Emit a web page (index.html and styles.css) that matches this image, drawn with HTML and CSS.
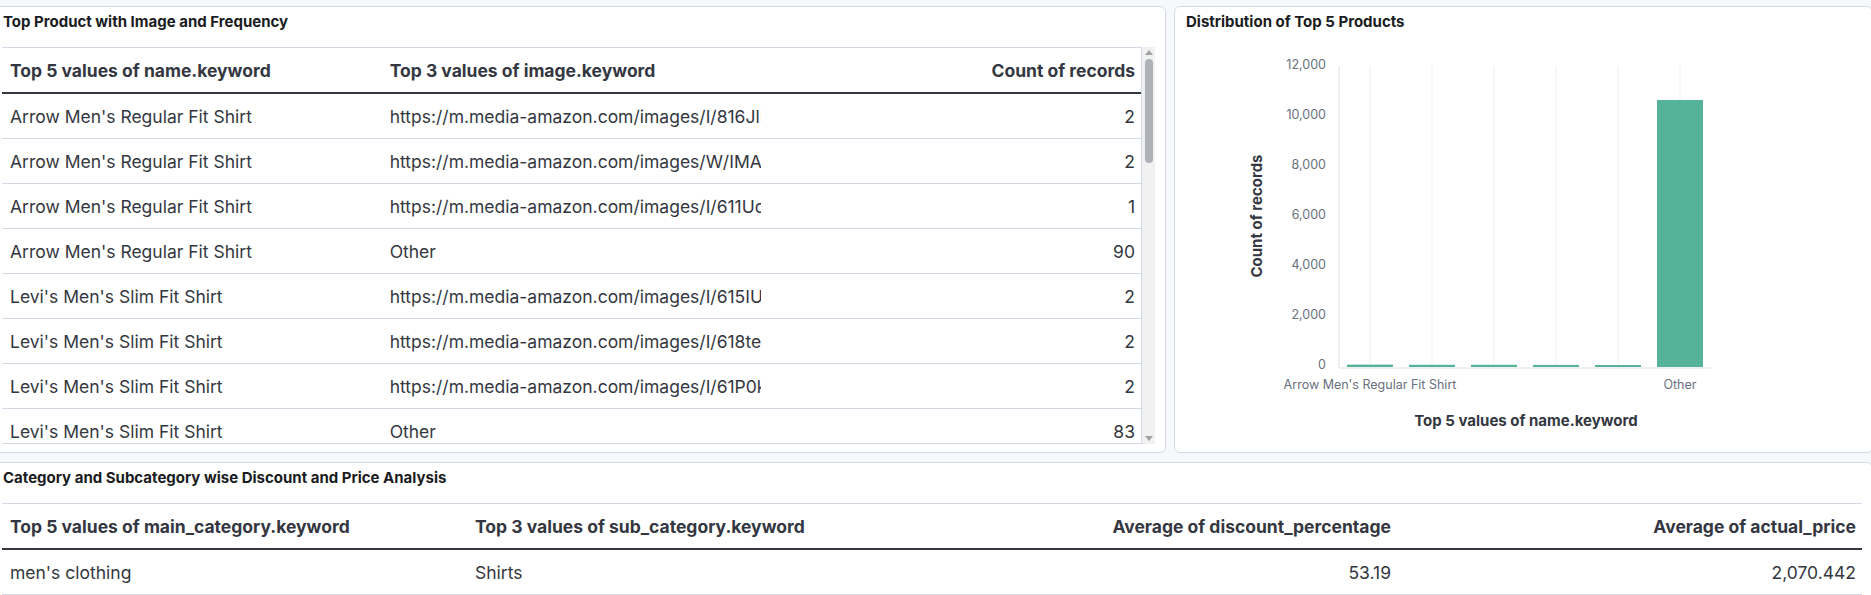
FILE: index.html
```html
<!DOCTYPE html>
<html lang="en">
<head>
<meta charset="utf-8">
<title>Dashboard</title>
<link rel="stylesheet" href="styles.css">
</head>
<body>
<div class="dashboard">
  <section class="panel panel-table">
    <h2 class="panel-title">Top Product with Image and Frequency</h2>
    <div class="table-wrap">
      <div class="table-scroll">
        <table class="dt">
          <thead>
            <tr><th>Top 5 values of name.keyword</th><th>Top 3 values of image.keyword</th><th class="num">Count of records</th></tr>
          </thead>
          <tbody>
            <tr><td>Arrow Men's Regular Fit Shirt</td><td class="clip">https://m.media-amazon.com/images/I/816JlP2dXzL._AC_UL320_.jpg</td><td class="num">2</td></tr>
            <tr><td>Arrow Men's Regular Fit Shirt</td><td class="clip">https://m.media-amazon.com/images/W/IMAGERENDERING_521856-T1/images/I/71q.jpg</td><td class="num">2</td></tr>
            <tr><td>Arrow Men's Regular Fit Shirt</td><td class="clip">https://m.media-amazon.com/images/I/611UoZ8cKIL._AC_UL320_.jpg</td><td class="num">1</td></tr>
            <tr><td>Arrow Men's Regular Fit Shirt</td><td>Other</td><td class="num">90</td></tr>
            <tr><td>Levi's Men's Slim Fit Shirt</td><td class="clip">https://m.media-amazon.com/images/I/615IUvLLuJL._AC_UL320_.jpg</td><td class="num">2</td></tr>
            <tr><td>Levi's Men's Slim Fit Shirt</td><td class="clip">https://m.media-amazon.com/images/I/618teHwUAbL._AC_UL320_.jpg</td><td class="num">2</td></tr>
            <tr><td>Levi's Men's Slim Fit Shirt</td><td class="clip">https://m.media-amazon.com/images/I/61P0kEXfhcL._AC_UL320_.jpg</td><td class="num">2</td></tr>
            <tr><td>Levi's Men's Slim Fit Shirt</td><td>Other</td><td class="num">83</td></tr>
          </tbody>
        </table>
      </div>
      <div class="scrollbar">
        <span class="arrow up"></span>
        <div class="track"><div class="thumb"></div></div>
        <span class="arrow down"></span>
      </div>
    </div>
  </section>

  <section class="panel panel-chart">
    <h2 class="panel-title">Distribution of Top 5 Products</h2>
    <svg class="chart" width="677" height="396" viewBox="0 0 677 396">
      <g class="grid">
        <line x1="185" y1="19" x2="185" y2="320"/>
        <line x1="247" y1="19" x2="247" y2="320"/>
        <line x1="309" y1="19" x2="309" y2="320"/>
        <line x1="371" y1="19" x2="371" y2="320"/>
        <line x1="433" y1="19" x2="433" y2="320"/>
        <line x1="495" y1="19" x2="495" y2="320"/>
      </g>
      <g class="axis">
        <line x1="154" y1="19" x2="154" y2="321"/>
        <line x1="154" y1="321" x2="526" y2="321"/>
      </g>
      <g class="bars">
        <rect x="162" y="317.6" width="46" height="2.4"/>
        <rect x="224" y="317.8" width="46" height="2.2"/>
        <rect x="286" y="317.8" width="46" height="2.2"/>
        <rect x="348" y="317.9" width="46" height="2.1"/>
        <rect x="410" y="318" width="46" height="2"/>
        <rect x="472" y="53" width="46" height="267"/>
      </g>
      <g class="ticks">
        <text x="141" y="19">12,000</text>
        <text x="141" y="69">10,000</text>
        <text x="141" y="119">8,000</text>
        <text x="141" y="169">6,000</text>
        <text x="141" y="219">4,000</text>
        <text x="141" y="269">2,000</text>
        <text x="141" y="319">0</text>
      </g>
      <g class="xticks">
        <text x="185" y="339">Arrow Men's Regular Fit Shirt</text>
        <text x="495" y="339">Other</text>
      </g>
      <text class="axis-title" x="341" y="375">Top 5 values of name.keyword</text>
      <text class="axis-title" transform="translate(73 169) rotate(-90)" x="0" y="0">Count of records</text>
    </svg>
  </section>

  <section class="panel panel-wide">
    <h2 class="panel-title">Category and Subcategory wise Discount and Price Analysis</h2>
    <div class="table-plain">
      <table class="dt">
        <thead>
          <tr><th>Top 5 values of main_category.keyword</th><th>Top 3 values of sub_category.keyword</th><th class="num">Average of discount_percentage</th><th class="num">Average of actual_price</th></tr>
        </thead>
        <tbody>
          <tr><td>men's clothing</td><td>Shirts</td><td class="num">53.19</td><td class="num">2,070.442</td></tr>
        </tbody>
      </table>
    </div>
  </section>
</div>
</body>
</html>
```

FILE: styles.css
```css
* { box-sizing: border-box; }

html, body {
  margin: 0;
  padding: 0;
  background: #f7f8fc;
  overflow: hidden;
}

body {
  font-family: Inter, "Noto Sans", "Liberation Sans", sans-serif;
  color: #343741;
}

.dashboard {
  display: grid;
  grid-template-columns: 1175px 1fr;
  grid-template-rows: 447px 200px;
  gap: 9px 8px;
  margin: 6px -2px 0 -9px;
}

.panel {
  background: #ffffff;
  border: 1px solid #d3dae6;
  border-radius: 6px;
  padding: 7px 10px 8px;
  display: flex;
  flex-direction: column;
  overflow: hidden;
  min-width: 0;
}

.panel-wide {
  grid-column: 1 / 3;
}

.panel-title {
  margin: 0 0 17px 1px;
  font-size: 15px;
  line-height: 16px;
  font-weight: 700;
  color: #1a1c21;
}

.table-wrap {
  flex: 1;
  display: flex;
  min-height: 0;
}

.table-scroll {
  flex: 1;
  min-width: 0;
  overflow: hidden;
  border-top: 1px solid #d3dae6;
  border-right: 1px solid #d3dae6;
  border-bottom: 1px solid #d3dae6;
}

.table-plain {
  border-top: 1px solid #d3dae6;
}

.dt {
  width: 100%;
  table-layout: fixed;
  border-collapse: collapse;
  font-size: 17.5px;
}

.dt th {
  height: 45px;
  padding: 0 8px;
  text-align: left;
  font-weight: 700;
  color: #343741;
  border-bottom: 2px solid #343741;
  white-space: nowrap;
  overflow: hidden;
}

.dt td {
  height: 45px;
  padding: 1px 8px 0;
  font-weight: 400;
  color: #343741;
  border-bottom: 1px solid #d3dae6;
  white-space: nowrap;
  overflow: hidden;
}

.dt .num {
  text-align: right;
  padding-right: 6px;
}

.dt td.clip {
  text-overflow: clip;
  padding-right: 0;
}

.scrollbar {
  width: 13px;
  display: flex;
  flex-direction: column;
  align-items: center;
  background: #f1f1f1;
  padding: 3px 0;
}

.arrow {
  width: 0;
  height: 0;
  border-left: 4px solid transparent;
  border-right: 4px solid transparent;
}

.arrow.up {
  border-bottom: 5px solid #a3a3a3;
  margin-bottom: 4px;
}

.arrow.down {
  border-top: 5px solid #a3a3a3;
  margin-top: 4px;
}

.track {
  flex: 1;
  width: 100%;
  display: flex;
  justify-content: center;
}

.thumb {
  width: 8px;
  height: 104px;
  border-radius: 4px;
  background: #aeb1b7;
}

.chart {
  display: block;
  font-family: Inter, "Noto Sans", "Liberation Sans", sans-serif;
}

.chart .grid line {
  stroke: #eef0f3;
  stroke-width: 1;
}

.chart .axis line {
  stroke: #eef0f3;
  stroke-width: 2;
}

.chart .bars rect {
  fill: #54b399;
}

.chart .ticks text {
  font-size: 12.5px;
  fill: #69707d;
  text-anchor: end;
  dominant-baseline: middle;
}

.chart .xticks text {
  font-size: 12.5px;
  fill: #69707d;
  text-anchor: middle;
  dominant-baseline: middle;
}

.chart .axis-title {
  font-size: 15px;
  font-weight: 700;
  fill: #343741;
  text-anchor: middle;
  dominant-baseline: middle;
}
```
